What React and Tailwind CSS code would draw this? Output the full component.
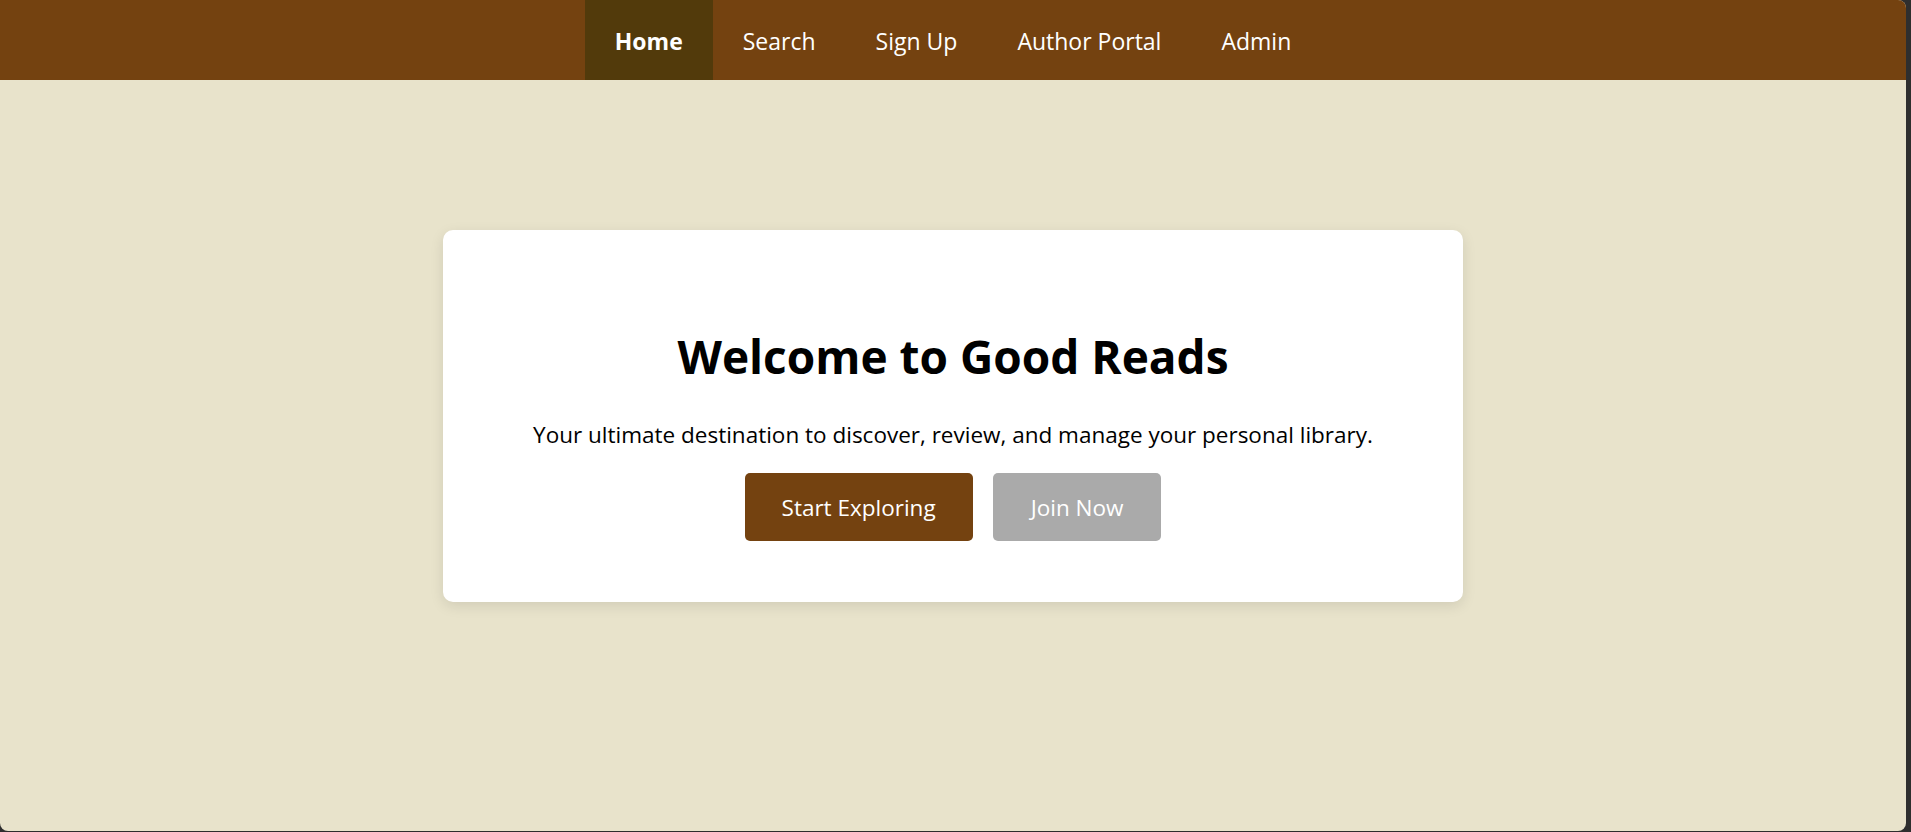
const links = ["Home", "Search", "Sign Up", "Author Portal", "Admin"];

export default function App() {
  return (
    <div className="w-full h-[832px] bg-[#2e2e2e]">
      <div
        className="w-[1906px] h-[831px] bg-[#e8e3cb] rounded-tr-[8px] rounded-b-[8px] overflow-hidden flex flex-col"
        style={{ fontFamily: '"Open Sans", "Noto Sans", sans-serif' }}
      >
        {/* top nav */}
        <nav className="h-[80px] bg-[#744210] flex justify-center">
          {links.map((l, i) => (
            <a
              key={l}
              href="#"
              className={
                i === 0
                  ? "flex items-center px-[30px] pt-[3px] text-[23px] font-bold text-white bg-[#523a0b]"
                  : "flex items-center px-[30px] pt-[3px] text-[23px] text-white"
              }
            >
              {l}
            </a>
          ))}
        </nav>

        <main className="flex justify-center pt-[150px]">
          <section className="w-[1020px] h-[372px] bg-white rounded-[10px] shadow-[0_4px_14px_rgba(0,0,0,0.1)] flex flex-col items-center pt-[99px]">
            <h1 className="text-[46px] font-bold leading-[1.2] text-black">Welcome to Good Reads</h1>
            <p className="mt-[36px] text-[22.5px] leading-[1.3] text-black">
              Your ultimate destination to discover, review, and manage your personal library.
            </p>
            <div className="mt-[24px] flex gap-[20px]">
              <button className="h-[68px] px-[37px] rounded-[5px] bg-[#744210] text-white text-[22.5px]">
                Start Exploring
              </button>
              <button className="h-[68px] px-[38px] rounded-[5px] bg-[#aaaaaa] text-white text-[22.5px]">
                Join Now
              </button>
            </div>
          </section>
        </main>
      </div>
    </div>
  );
}
